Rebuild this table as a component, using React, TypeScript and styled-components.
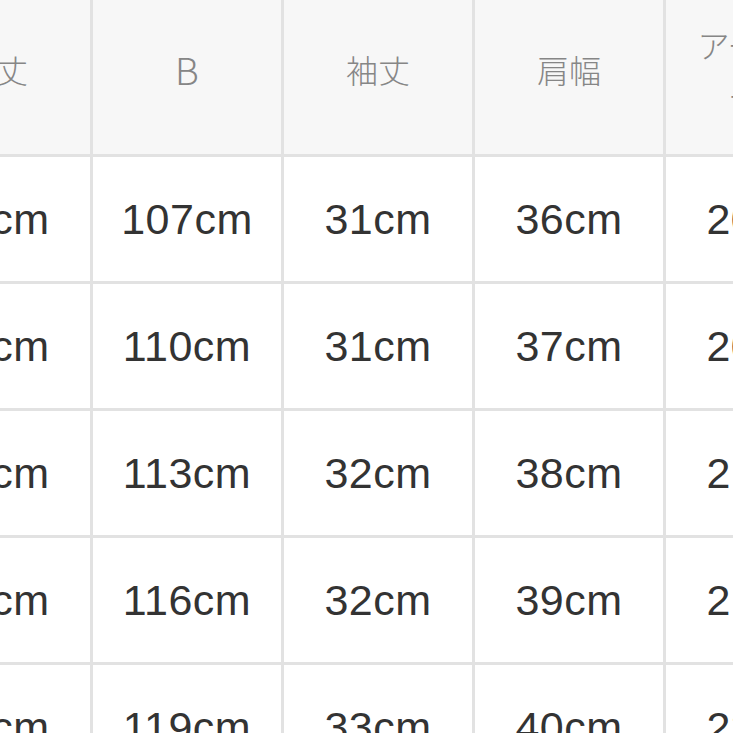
import React from 'react';
import styled, { createGlobalStyle } from 'styled-components';

const GlobalStyle = createGlobalStyle`
  html, body {
    margin: 0;
    padding: 0;
    background: #ffffff;
    overflow: hidden;
  }
`;

const Viewport = styled.div`
  width: 733px;
  height: 733px;
  overflow: hidden;
  background: #ffffff;
`;

const Grid = styled.div`
  display: grid;
  grid-template-columns: repeat(5, 188px);
  grid-template-rows: 154px;
  grid-auto-rows: 124px;
  gap: 3px;
  width: max-content;
  margin-left: -98px;
  background: #e2e2e2;
  border-bottom: 3px solid #e2e2e2;
`;

const HeadCell = styled.div<{ $latin?: boolean }>`
  display: flex;
  align-items: center;
  justify-content: center;
  padding-bottom: 14px;
  box-sizing: border-box;
  background: #f7f7f7;
  color: #868686;
  font-family: 'Noto Sans CJK JP', 'Liberation Sans', sans-serif;
  font-size: ${(p) => (p.$latin ? '37px' : '32px')};
  font-weight: 300;
  line-height: 1.6;
  text-align: center;
`;

const Cell = styled.div`
  display: flex;
  align-items: center;
  justify-content: center;
  background: #ffffff;
  color: #333333;
  font-family: 'Liberation Sans', 'Noto Sans', sans-serif;
  font-size: 43px;
  letter-spacing: 0.5px;
`;

const headers: { label: React.ReactNode; latin?: boolean }[] = [
  { label: '着丈' },
  { label: 'B', latin: true },
  { label: '袖丈' },
  { label: '肩幅' },
  {
    label: (
      <>
        アームホ
        <br />
        ール
      </>
    ),
  },
];

const rows = [
  ['66cm', '107cm', '31cm', '36cm', '20cm'],
  ['67cm', '110cm', '31cm', '37cm', '20cm'],
  ['68cm', '113cm', '32cm', '38cm', '21cm'],
  ['69cm', '116cm', '32cm', '39cm', '21cm'],
  ['70cm', '119cm', '33cm', '40cm', '22cm'],
];

const App = () => {
  return (
    <>
      <GlobalStyle />
      <Viewport>
        <Grid>
          {headers.map((h, i) => (
            <HeadCell key={'h' + i} $latin={h.latin}>
              {h.label}
            </HeadCell>
          ))}
          {rows.map((r, ri) =>
            r.map((v, ci) => <Cell key={ri + '-' + ci}>{v}</Cell>)
          )}
        </Grid>
      </Viewport>
    </>
  );
};

export default App;
